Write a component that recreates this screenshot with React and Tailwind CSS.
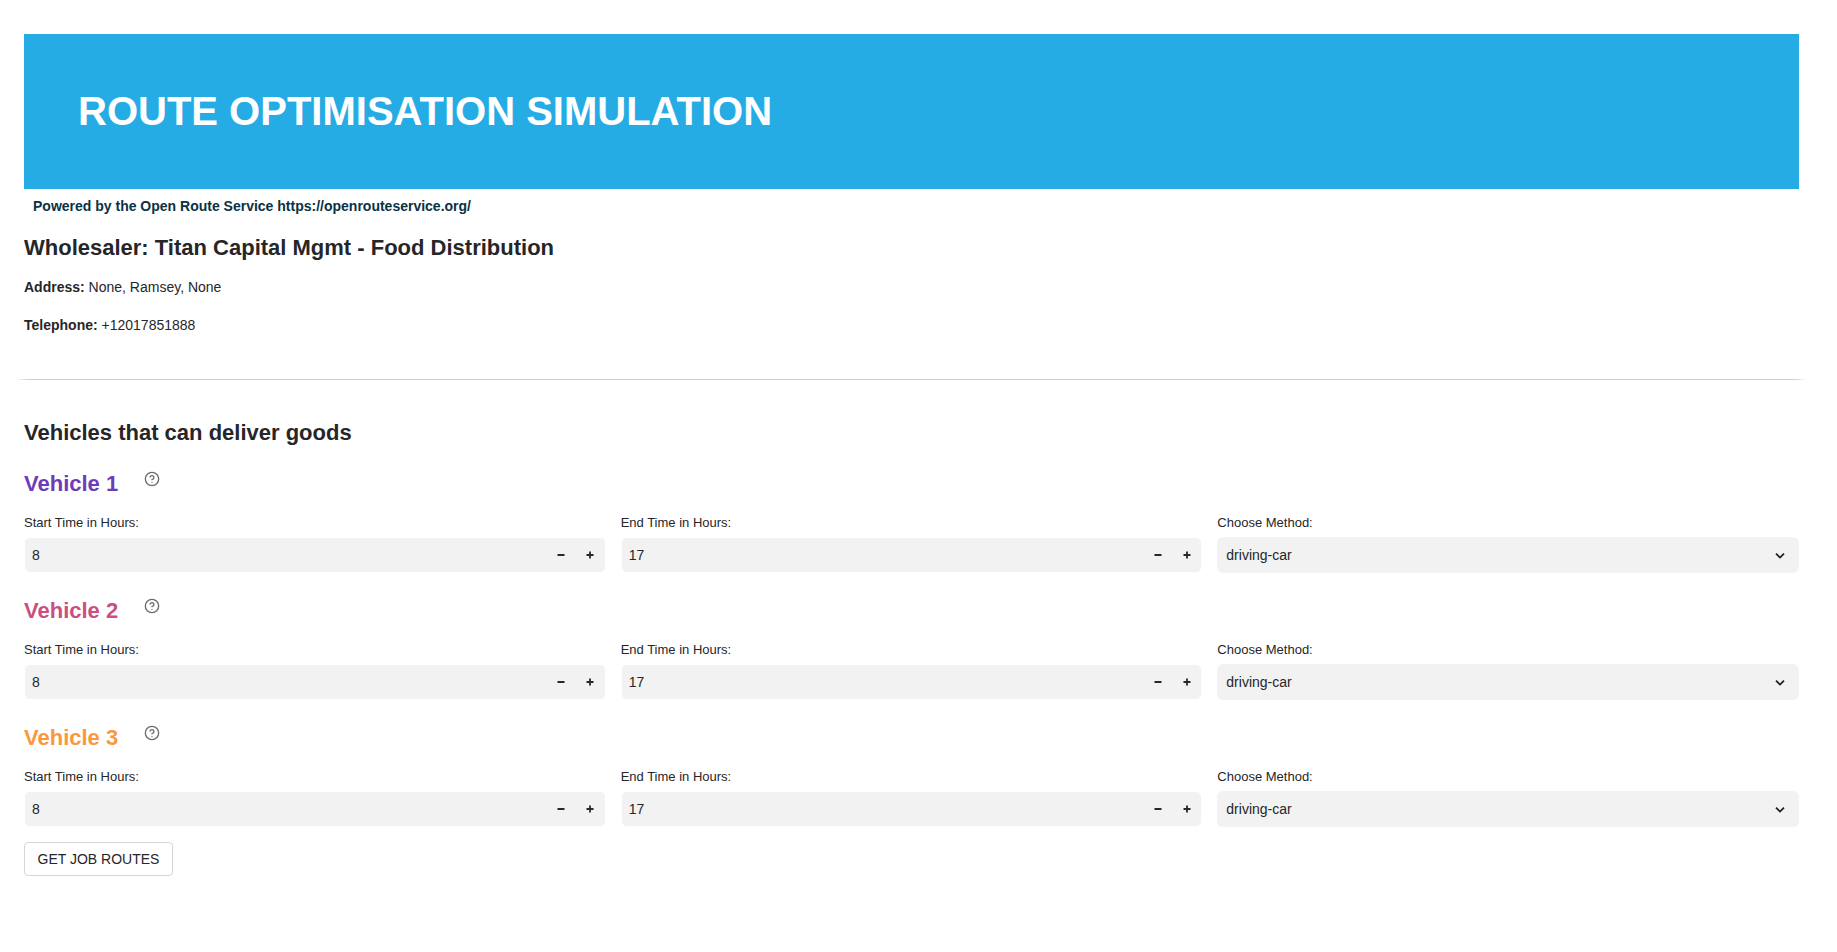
import { useState } from "react";
import { CircleHelp } from "lucide-react";

const vehicles = [
  { id: 1, color: "text-[#6f3cb8]" },
  { id: 2, color: "text-[#cb4f7f]" },
  { id: 3, color: "text-[#fa983c]" },
];

const methods = ["driving-car", "driving-hgv", "cycling-regular", "foot-walking"];

function StepButton({ label, onClick, path }) {
  return (
    <button
      type="button"
      aria-label={label}
      onClick={onClick}
      className="flex w-[29px] items-center justify-center text-[#262730]"
    >
      <svg viewBox="0 0 8 8" className="size-2" fill="none" stroke="currentColor" strokeWidth="1.8">
        <path d={path} />
      </svg>
    </button>
  );
}

function NumberField({ id, label, initial }) {
  const [value, setValue] = useState(initial);
  return (
    <div className="min-w-0">
      <label htmlFor={id} className="block text-[13px] leading-5">
        {label}
      </label>
      <div className="mt-1 flex h-9 overflow-hidden rounded-md border border-white bg-[#f2f2f2]">
        <input
          id={id}
          type="text"
          inputMode="numeric"
          value={value}
          onChange={(e) => setValue(Number(e.target.value) || 0)}
          className="min-w-0 flex-1 bg-transparent px-[7px] text-sm outline-none"
        />
        <StepButton label={`Decrease ${label}`} onClick={() => setValue(value - 1)} path="M0.5 4H7.5" />
        <StepButton label={`Increase ${label}`} onClick={() => setValue(value + 1)} path="M0.5 4H7.5M4 0.5V7.5" />
      </div>
    </div>
  );
}

function MethodField({ id }) {
  return (
    <div className="min-w-0">
      <label htmlFor={id} className="block text-[13px] leading-5">
        Choose Method:
      </label>
      <div className="relative mt-1">
        <select
          id={id}
          className="block h-9 w-full appearance-none rounded-md bg-[#f2f2f2] px-[9px] text-sm outline-none"
        >
          {methods.map((m) => (
            <option key={m}>{m}</option>
          ))}
        </select>
        <svg
          viewBox="0 0 10 6"
          className="pointer-events-none absolute top-4 right-[14px] h-[6px] w-[10px]"
          fill="none"
          stroke="#1f1f24"
          strokeWidth="1.8"
        >
          <path d="M1 0.7L5 4.6L9 0.7" />
        </svg>
      </div>
    </div>
  );
}

function Vehicle({ id, color }) {
  return (
    <section>
      <div className="flex items-start">
        <h3 className={`text-[22px] leading-7 font-bold ${color}`}>Vehicle {id}</h3>
        <button type="button" aria-label={`Help for vehicle ${id}`} className="ml-[26px] pt-px text-[#6b6b70]">
          <CircleHelp className="size-4" strokeWidth={2} />
        </button>
      </div>
      <div className="mt-[15px] grid grid-cols-3 gap-[15px]">
        <NumberField id={`start-${id}`} label="Start Time in Hours:" initial={8} />
        <NumberField id={`end-${id}`} label="End Time in Hours:" initial={17} />
        <MethodField id={`method-${id}`} />
      </div>
    </section>
  );
}

export default function App() {
  return (
    <main className="min-h-screen bg-white pt-[34px] pr-[38px] pb-10 pl-6 font-['Liberation_Sans',Arial,sans-serif] text-[#262629]">
      <header className="bg-[#26ace4] px-[54px] py-[47px]">
        <h1 className="text-[40px] leading-[61px] font-bold text-white">ROUTE OPTIMISATION SIMULATION</h1>
      </header>
      <p className="pl-[9px] text-sm leading-[34px] font-bold text-[#0a3144]">
        Powered by the Open Route Service https://openrouteservice.org/
      </p>
      <h2 className="mt-[11px] text-[22px] leading-7 font-bold">Wholesaler: Titan Capital Mgmt - Food Distribution</h2>
      <p className="mt-[15px] text-sm leading-5">
        <strong>Address:</strong> None, Ramsey, None
      </p>
      <p className="mt-[18px] text-sm leading-5">
        <strong>Telephone:</strong> +12017851888
      </p>
      <hr className="-mx-2 mt-[44px] h-px border-0 bg-[linear-gradient(to_right,transparent,#d0d1d3_12px,#d0d1d3_calc(100%-12px),transparent)]" />
      <h2 className="mt-[39px] text-[22px] leading-7 font-bold">Vehicles that can deliver goods</h2>
      <div className="mt-[23px] flex flex-col gap-6">
        {vehicles.map((v) => (
          <Vehicle key={v.id} {...v} />
        ))}
      </div>
      <button
        type="button"
        className="mt-[15px] block h-[34px] min-w-[149px] rounded border border-[#d5d6d8] bg-white px-[11px] text-sm"
      >
        GET JOB ROUTES
      </button>
    </main>
  );
}
